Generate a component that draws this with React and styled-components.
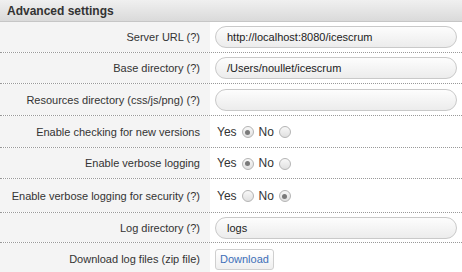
import React from "react";
import styled, { createGlobalStyle } from "styled-components";

const GlobalStyle = createGlobalStyle`
  html, body {
    margin: 0;
    padding: 0;
    background: #ffffff;
  }
  body {
    font-family: "Liberation Sans", Arial, sans-serif;
    font-size: 11px;
    color: #333;
  }
`;

const Panel = styled.div`
  width: 462px;
  height: 272px;
  overflow: hidden;
  background: #fff;
`;

const Header = styled.div`
  height: 21px;
  display: flex;
  align-items: center;
  padding: 0 7px;
  background: linear-gradient(#f0f0f0, #dadada);
  border-bottom: 1px solid #c6c6c6;
  font-size: 12px;
  font-weight: bold;
  color: #333;
`;

const Row = styled.div`
  display: grid;
  grid-template-columns: 210px 1fr;
  min-height: ${(p) => p.$h || 30}px;
  border-bottom: ${(p) => (p.$last ? "none" : "1px dotted #999")};
`;

const Label = styled.div`
  background: #f4f4f4;
  display: flex;
  align-items: center;
  justify-content: flex-end;
  padding-right: 10px;
  color: #333;
`;

const Field = styled.div`
  display: flex;
  align-items: center;
  padding: 0 5px 0 5px;
`;

const TextInput = styled.div`
  box-sizing: border-box;
  width: 242px;
  height: 22px;
  border: 1px solid #c9c9c9;
  border-radius: 11px;
  background: linear-gradient(#fdfdfd, #ececec);
  display: flex;
  align-items: center;
  padding-left: 11px;
  color: #222;
  font-size: 11px;
`;

const RadioGroup = styled.div`
  display: flex;
  align-items: center;
  padding-left: 2px;
  font-size: 12px;
  color: #333;
`;

const RadioText = styled.span`
  margin-right: 5px;
`;

const Radio = styled.span`
  box-sizing: border-box;
  width: 12px;
  height: 12px;
  border-radius: 50%;
  border: 1px solid #b4b4b4;
  background: linear-gradient(#f8f8f8, #e0e0e0);
  margin-right: 5px;
  margin-top: 1px;
  display: flex;
  align-items: center;
  justify-content: center;
  &::after {
    content: "";
    width: 5px;
    height: 5px;
    border-radius: 50%;
    background: ${(p) => (p.$on ? "#7a7a7a" : "transparent")};
  }
`;

const Button = styled.div`
  box-sizing: border-box;
  height: 21px;
  padding: 0 4px;
  border: 1px solid #cfcfcf;
  border-radius: 3px;
  background: linear-gradient(#ffffff, #efefef);
  color: #3c6fb8;
  font-size: 11px;
  display: flex;
  align-items: center;
`;

const YesNo = ({ value }) => (
  <RadioGroup>
    <RadioText>Yes</RadioText>
    <Radio $on={value} />
    <RadioText>No</RadioText>
    <Radio $on={!value} />
  </RadioGroup>
);

const rows = [
  { label: "Server URL (?)", input: "http://localhost:8080/icescrum" },
  { label: "Base directory (?)", input: "/Users/noullet/icescrum" },
  { label: "Resources directory (css/js/png) (?)", input: "", h: 31 },
  { label: "Enable checking for new versions", radio: true, h: 31 },
  { label: "Enable verbose logging", radio: true, h: 30 },
  { label: "Enable verbose logging for security (?)", radio: false, h: 33 },
  { label: "Log directory (?)", input: "logs", h: 29 },
];

export default function App() {
  return (
    <Panel>
      <GlobalStyle />
      <Header>Advanced settings</Header>
      {rows.map((r) => (
        <Row key={r.label} $h={r.h}>
          <Label>{r.label}</Label>
          <Field>
            {r.radio === undefined ? (
              <TextInput>{r.input}</TextInput>
            ) : (
              <YesNo value={r.radio} />
            )}
          </Field>
        </Row>
      ))}
      <Row $h={32} $last>
        <Label>Download log files (zip file)</Label>
        <Field>
          <Button>Download</Button>
        </Field>
      </Row>
    </Panel>
  );
}
